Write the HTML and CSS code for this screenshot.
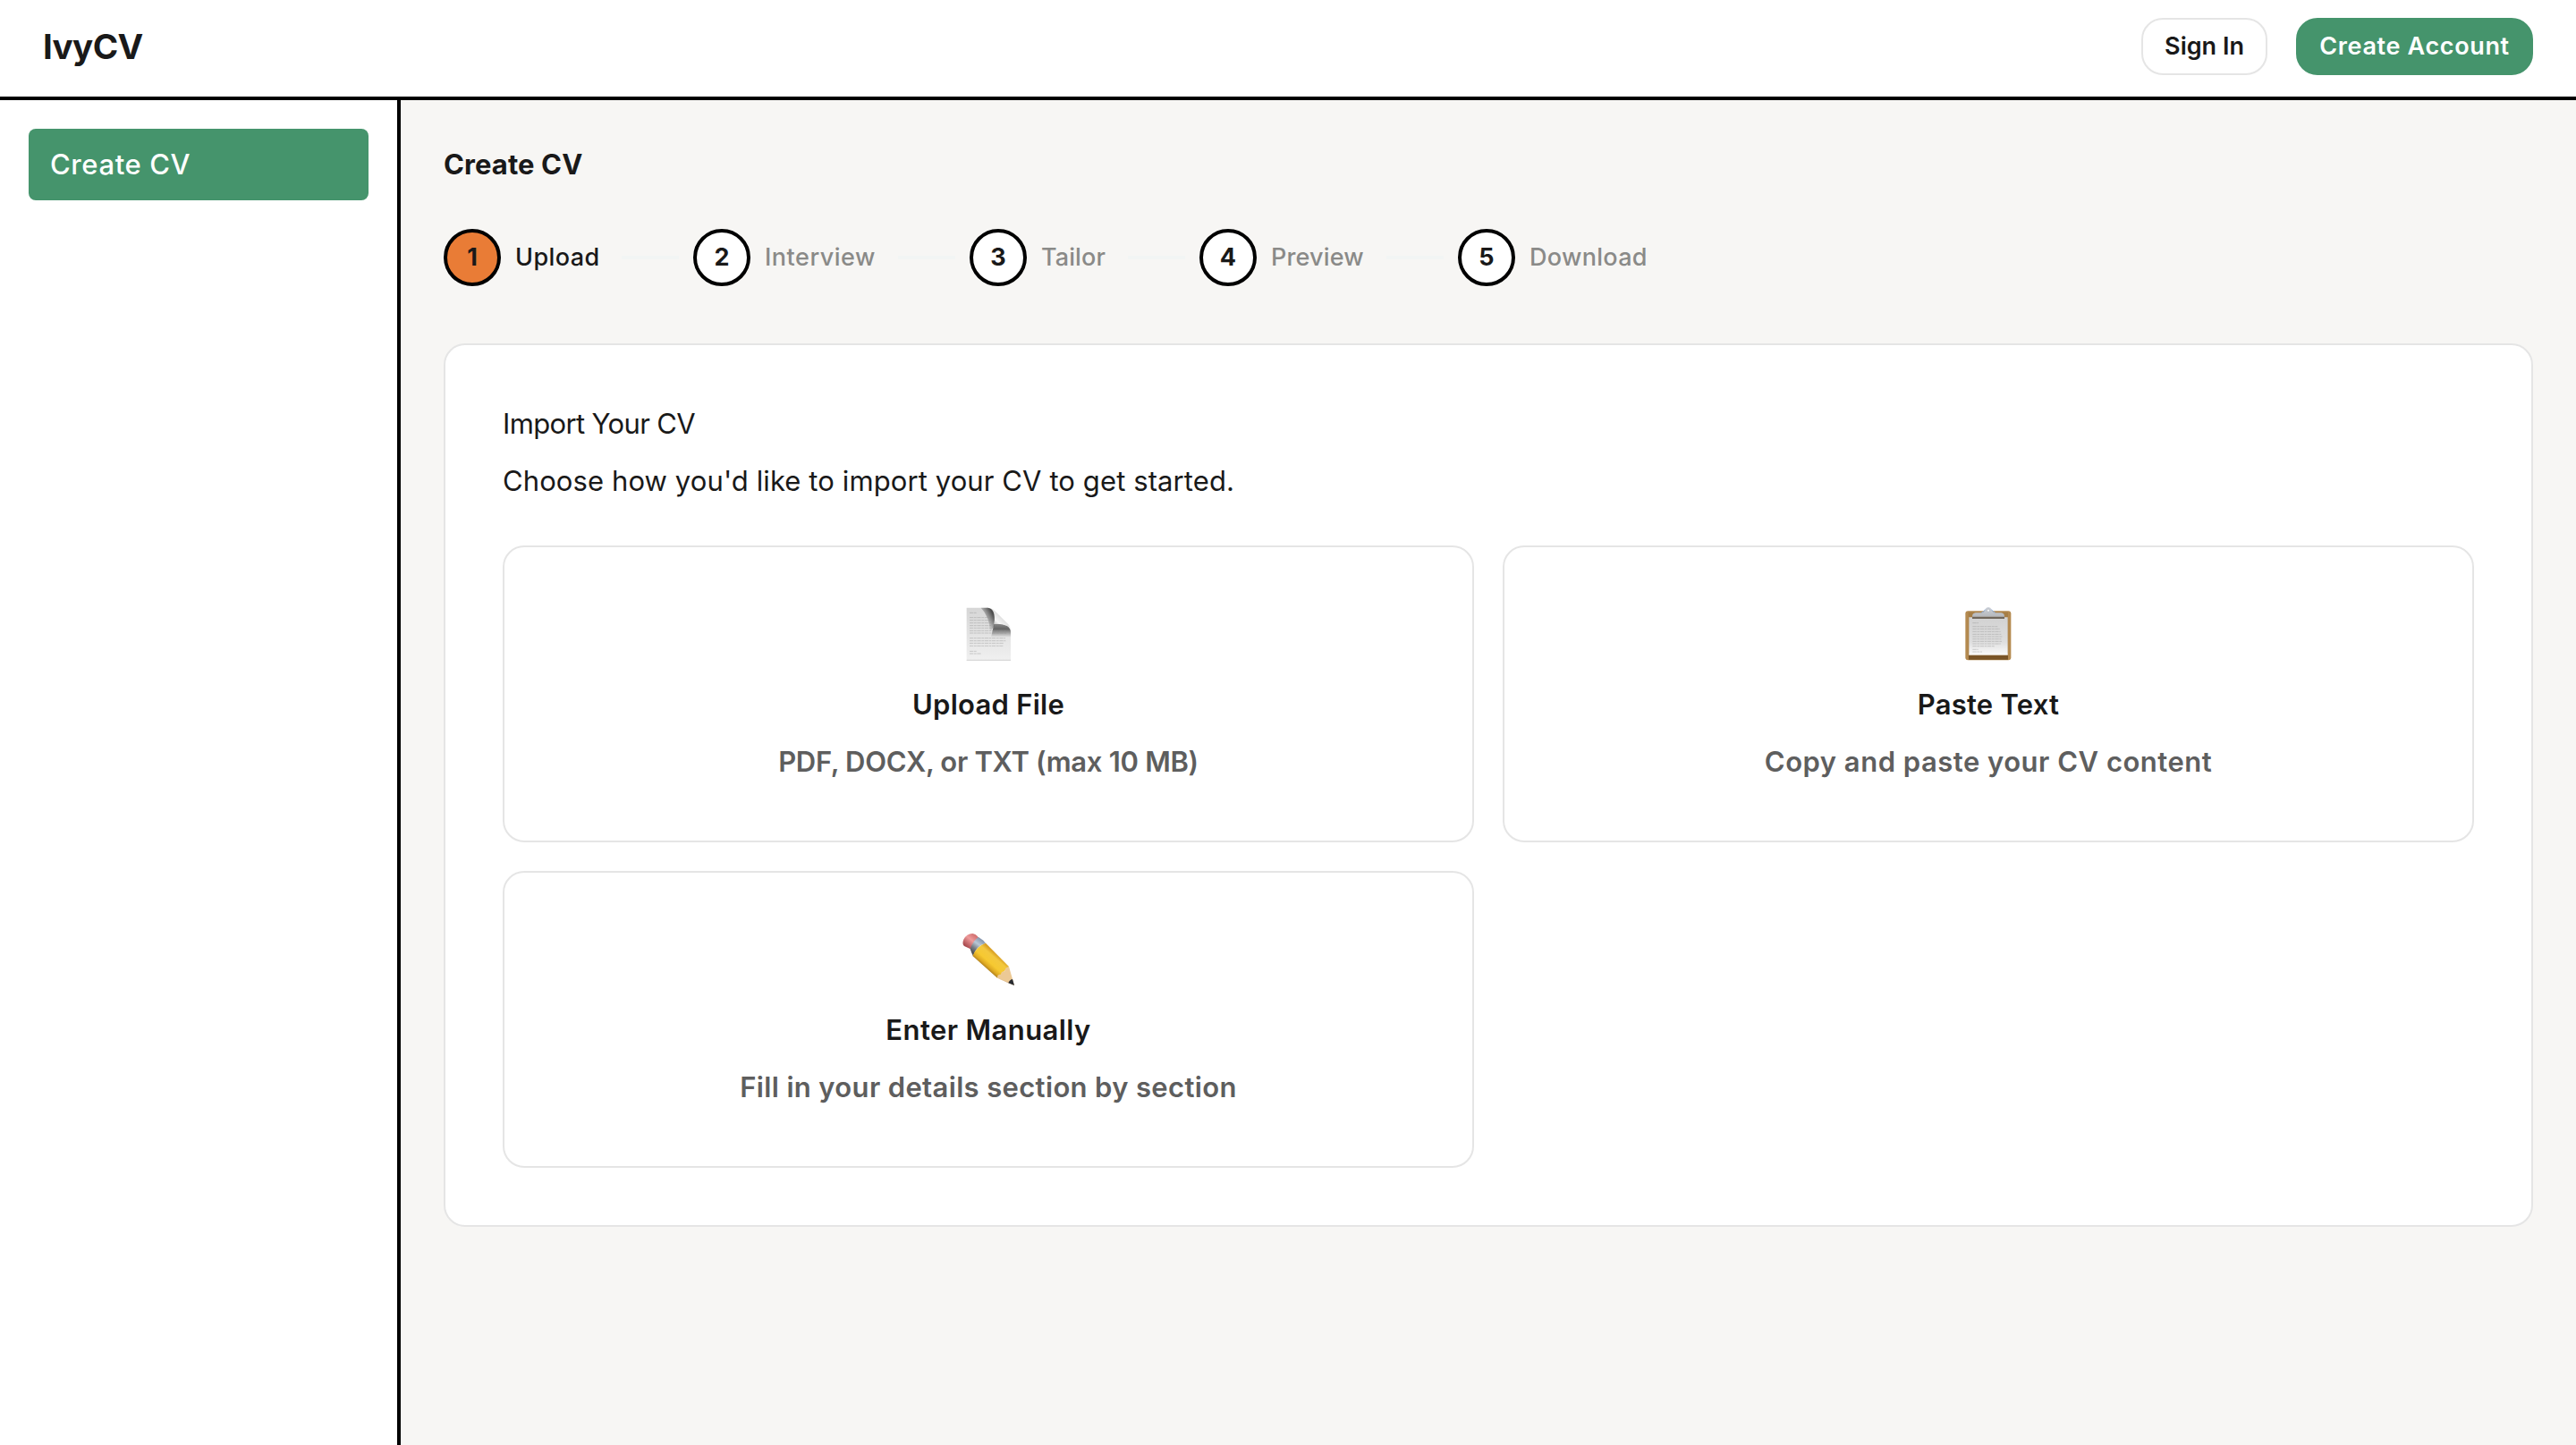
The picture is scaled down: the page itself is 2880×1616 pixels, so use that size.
FILE: index.html
```html
<!DOCTYPE html>
<html lang="en">
<head>
<meta charset="utf-8">
<title>IvyCV</title>
<link rel="stylesheet" href="styles.css">
</head>
<body>
<header class="topbar">
  <div class="brand">IvyCV</div>
  <div class="actions">
    <button class="btn btn-outline">Sign In</button>
    <button class="btn btn-primary">Create Account</button>
  </div>
</header>
<div class="shell">
  <nav class="sidebar"><a class="nav-item">Create CV</a></nav>
  <main class="content">
    <h1 class="page-title">Create CV</h1>
    <ol class="steps">
      <li class="step active"><span class="dot">1</span><span class="label upload">Upload</span></li>
      <li class="line"></li>
      <li class="step"><span class="dot">2</span><span class="label interview">Interview</span></li>
      <li class="line"></li>
      <li class="step"><span class="dot">3</span><span class="label tailor">Tailor</span></li>
      <li class="line"></li>
      <li class="step"><span class="dot">4</span><span class="label preview">Preview</span></li>
      <li class="line"></li>
      <li class="step"><span class="dot">5</span><span class="label download">Download</span></li>
    </ol>
    <section class="card">
      <h2 class="card-title">Import Your CV</h2>
      <p class="card-text">Choose how you'd like to import your CV to get started.</p>
      <div class="options">
        <div class="option option-upload">
          <svg class="icon" viewBox="39 51 192 192">
            <defs>
              <linearGradient id="page" x1="0" y1="0" x2="0" y2="1"><stop offset="0" stop-color="#d6d6d6"/><stop offset="1" stop-color="#f0f0f0"/></linearGradient>
              <linearGradient id="shadeTop" gradientUnits="userSpaceOnUse" x1="122" y1="106" x2="155" y2="88"><stop offset="0" stop-color="#555" stop-opacity="0"/><stop offset="1" stop-color="#3c3c3c" stop-opacity="0.9"/></linearGradient>
              <linearGradient id="shade" gradientUnits="userSpaceOnUse" x1="0" y1="158" x2="0" y2="118"><stop offset="0" stop-color="#555" stop-opacity="0"/><stop offset="0.7" stop-color="#444" stop-opacity="0.8"/><stop offset="1" stop-color="#555" stop-opacity="0.7"/></linearGradient>
              <linearGradient id="fold" gradientUnits="userSpaceOnUse" x1="156" y1="114" x2="180" y2="88"><stop offset="0" stop-color="#c8c8c8"/><stop offset="0.35" stop-color="#f6f6f6"/><stop offset="1" stop-color="#dcdcdc"/></linearGradient>
            </defs>
            <path d="M62 59H134Q150 61 156 76L198 116Q210 126 210 142V235H62Z" fill="url(#page)"/>
            <path d="M110 59H134Q150 61 154 80Q157 96 154 122L140 140Q140 90 110 59Z" fill="url(#shadeTop)"/>
            <path d="M144 158L154 114Q180 112 198 120Q210 128 210 142V158Z" fill="url(#shade)"/>
            <path d="M140 60Q153 64 156 82Q158 98 154 114Q180 112 198 119Q206 123 209 132Q209 120 196 109L157 70Q149 61 140 60Z" fill="url(#fold)"/>
            <path d="M72 76H96M72 92H138M72 101H142M72 110H145M72 119H144M72 127H148M72 136H196M72 144H198M72 161H192M72 170H193M72 178H186M72 187H184M72 205H96M72 213H112" stroke="#8b8b8b" stroke-opacity="0.38" stroke-width="3" stroke-dasharray="13 2 8 2"/>
            <path d="M62 235H210" stroke="#bcbcbc" stroke-width="2"/>
          </svg>
          <h3>Upload File</h3>
          <p>PDF, DOCX, or TXT (max 10 MB)</p>
        </div>
        <div class="option option-paste">
          <svg class="icon" viewBox="39 51 192 192">
            <defs>
              <linearGradient id="sheet" x1="0" y1="0" x2="0" y2="1"><stop offset="0" stop-color="#d2d2d2"/><stop offset="0.65" stop-color="#dedede"/><stop offset="1" stop-color="#fafafa"/></linearGradient>
              <linearGradient id="clip" x1="0" y1="0" x2="0" y2="1"><stop offset="0" stop-color="#cdd2da"/><stop offset="1" stop-color="#b4b7bb"/></linearGradient>
            </defs>
            <rect x="58" y="70" width="153" height="165" rx="9" fill="#b48a50"/>
            <rect x="68" y="74" width="133" height="158" fill="#a67e47"/>
            <path d="M69 218H201V233H69Z" fill="#795427"/>
            <path d="M70 91H200V217H70Z" fill="url(#sheet)"/>
            <path d="M70 216H200" stroke="#f8f8f8" stroke-width="3"/>
            <path d="M82 110H102M82 122H166M82 130H174M82 139H176M82 148H178M82 156H183M82 164H178M82 172H180M82 180H176M82 188H156M82 199H101M82 207H114" stroke="#8e8e8e" stroke-opacity="0.38" stroke-width="3" stroke-dasharray="13 2 8 2"/>
            <rect x="81" y="88" width="108" height="8" fill="#6f665b"/>
            <path d="M81 89Q81 77 92 76H112Q121 75 124 65Q127 57 135 57Q143 57 146 65Q149 75 158 76H178Q189 77 189 89Z" fill="url(#clip)"/>
            <path d="M112 75Q121 74 124 65M146 65Q149 74 158 75" fill="none" stroke="#8fb0dc" stroke-width="3"/>
            <circle cx="135" cy="68" r="5" fill="#f6f6f6" stroke="#aab0b8" stroke-width="2"/>
          </svg>
          <h3>Paste Text</h3>
          <p>Copy and paste your CV content</p>
        </div>
        <div class="option option-manual">
          <svg class="icon" viewBox="39 33 192 192">
            <defs>
              <linearGradient id="body" gradientUnits="userSpaceOnUse" x1="162" y1="110" x2="122" y2="156"><stop offset="0" stop-color="#d79c1f"/><stop offset="0.22" stop-color="#f3c83e"/><stop offset="0.6" stop-color="#f6c931"/><stop offset="0.82" stop-color="#dfaa22"/><stop offset="1" stop-color="#a87a1d"/></linearGradient>
              <linearGradient id="metal" gradientUnits="userSpaceOnUse" x1="116" y1="62" x2="80" y2="112"><stop offset="0" stop-color="#7d8fa8"/><stop offset="0.35" stop-color="#b9c7d6"/><stop offset="0.65" stop-color="#777c83"/><stop offset="1" stop-color="#404246"/></linearGradient>
              <linearGradient id="rubber" gradientUnits="userSpaceOnUse" x1="94" y1="42" x2="56" y2="88"><stop offset="0" stop-color="#c96565"/><stop offset="0.45" stop-color="#ee9a9a"/><stop offset="1" stop-color="#9e3d42"/></linearGradient>
            </defs>
            <path d="M103 56L75 94L54 84Q46 76 52 62Q62 42 82 42Q92 43 103 56Z" fill="url(#rubber)"/>
            <path d="M102 54Q84 65 74 94L79 107L84 117Q96 82 126 75L118 65Z" fill="url(#metal)"/>
            <path d="M126 74Q96 84 82 117L165 191L204 153Z" fill="url(#body)"/>
            <path d="M165 191Q164 178 177 179Q178 168 190 169Q190 156 204 153L222 216Z" fill="#ecc995"/>
            <path d="M165 191L222 216L204 207Z" fill="#b98a55"/>
            <path d="M216 195L222 216L202 208Q206 197 216 195Z" fill="#292b31"/>
          </svg>
          <h3>Enter Manually</h3>
          <p>Fill in your details section by section</p>
        </div>
      </div>
    </section>
  </main>
</div>
</body>
</html>
```
FILE: styles.css
```css
* {
  box-sizing: border-box;
  margin: 0;
  padding: 0;
}

body {
  height: 1616px;
  display: flex;
  flex-direction: column;
  background: #f7f6f4;
  color: #191919;
  font-family: Inter, "Open Sans", sans-serif;
  font-size: 31px;
  line-height: 48px;
}

.topbar {
  height: 112px;
  flex: none;
  display: flex;
  align-items: flex-start;
  justify-content: space-between;
  padding: 20px 48px 0;
  background: #fff;
  border-bottom: 4px solid #000;
}

.brand {
  font-size: 38.5px;
  line-height: 64px;
  font-weight: 700;
  letter-spacing: -0.6px;
}

.actions {
  display: flex;
  gap: 32px;
}

.btn {
  height: 64px;
  border: 2px solid #e5e5e5;
  border-radius: 24px;
  font-family: inherit;
  font-size: 27px;
  font-weight: 600;
  line-height: 60px;
  text-align: center;
  color: #191919;
  background: #fff;
}

.btn-outline {
  width: 141px;
  letter-spacing: 0;
}

.btn-primary {
  width: 265px;
  color: #fff;
  background: #45946c;
  border-color: #45946c;
  letter-spacing: 0.65px;
}

.shell {
  flex: 1;
  display: flex;
}

.sidebar {
  width: 448px;
  flex: none;
  padding: 32px;
  background: #fff;
  border-right: 4px solid #000;
}

.nav-item {
  display: block;
  height: 80px;
  padding-left: 24px;
  border-radius: 8px;
  background: #45946c;
  color: #fff;
  font-weight: 550;
  line-height: 80px;
  letter-spacing: 0.6px;
}

.content {
  flex: 1;
  padding: 48px;
}

.page-title {
  font-size: 31px;
  line-height: 48px;
  font-weight: 700;
  letter-spacing: 0.1px;
}

.steps {
  display: flex;
  align-items: center;
  margin-top: 48px;
  list-style: none;
  font-size: 27px;
  font-weight: 550;
}

.step {
  display: flex;
  align-items: center;
  gap: 16px;
  color: #8a8a88;
}

.step.active {
  color: #191919;
}

.dot {
  width: 64px;
  height: 64px;
  border: 4px solid #000;
  border-radius: 50%;
  background: #fff;
  color: #191919;
  font-weight: 700;
  line-height: 56px;
  text-align: center;
}

.active .dot {
  background: #e97c36;
}

.label {
  white-space: nowrap;
}

.upload {
  width: 95px;
  letter-spacing: 0.4px;
}

.interview {
  width: 125px;
  letter-spacing: 0.5px;
}

.tailor {
  width: 73px;
  letter-spacing: 0.1px;
}

.preview {
  width: 105px;
  letter-spacing: 0.15px;
}

.download {
  letter-spacing: 0.3px;
}

.line {
  width: 64px;
  height: 4px;
  margin: 0 16px 0 24px;
  background: #f2f5f4;
}

.card {
  margin-top: 64px;
  padding: 64px;
  border: 2px solid #e5e5e5;
  border-radius: 24px;
  background: #fff;
}

.card-title {
  font-size: 31px;
  font-weight: 400;
  letter-spacing: -0.65px;
}

.card-text {
  margin-top: 16px;
  letter-spacing: 0.1px;
}

.options {
  display: grid;
  grid-template-columns: 1fr 1fr;
  gap: 32px;
  margin-top: 48px;
}

.option {
  height: 332px;
  display: flex;
  flex-direction: column;
  align-items: center;
  padding-top: 65px;
  border: 2px solid #e5e5e5;
  border-radius: 24px;
}

.icon {
  width: 64px;
  height: 64px;
}

.option h3 {
  margin-top: 23px;
  font-size: 31px;
  font-weight: 600;
  letter-spacing: 0.25px;
}

.option-manual h3 {
  letter-spacing: 0.4px;
}

.option p {
  margin-top: 16px;
  color: #5e5e5e;
  font-weight: 600;
  letter-spacing: 0.5px;
}

.option-upload p {
  letter-spacing: -0.3px;
}

.option-manual p {
  letter-spacing: 0.35px;
}
```
